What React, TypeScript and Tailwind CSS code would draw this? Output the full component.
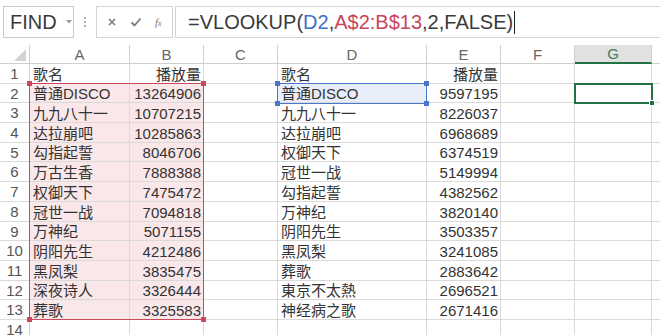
import React from "react";

const W = [
  "w-[30px]",
  "w-[100px]",
  "w-[74px]",
  "w-[74px]",
  "w-[149px]",
  "w-[74px]",
  "w-[74px]",
  "w-[77px]",
  "w-[60px]",
];

const H = [
  "h-[20px]",
  "h-[19px]",
  "h-[20px]",
  "h-[20px]",
  "h-[19px]",
  "h-[20px]",
  "h-[20px]",
  "h-[20px]",
  "h-[19px]",
  "h-[20px]",
  "h-[20px]",
  "h-[19px]",
  "h-[20px]",
  "h-[20px]",
];

const left: [string, string][] = [
  ["歌名", "播放量"],
  ["普通DISCO", "13264906"],
  ["九九八十一", "10707215"],
  ["达拉崩吧", "10285863"],
  ["勾指起誓", "8046706"],
  ["万古生香", "7888388"],
  ["权御天下", "7475472"],
  ["冠世一战", "7094818"],
  ["万神纪", "5071155"],
  ["阴阳先生", "4212486"],
  ["黑凤梨", "3835475"],
  ["深夜诗人", "3326444"],
  ["葬歌", "3325583"],
  ["", ""],
];

const right: [string, string][] = [
  ["歌名", "播放量"],
  ["普通DISCO", "9597195"],
  ["九九八十一", "8226037"],
  ["达拉崩吧", "6968689"],
  ["权御天下", "6374519"],
  ["冠世一战", "5149994"],
  ["勾指起誓", "4382562"],
  ["万神纪", "3820140"],
  ["阴阳先生", "3503357"],
  ["黑凤梨", "3241085"],
  ["葬歌", "2883642"],
  ["東京不太熱", "2696521"],
  ["神经病之歌", "2671416"],
  ["", ""],
];

const FONT = "font-['Liberation_Sans','Noto_Sans_CJK_SC',sans-serif]";

function Corner({ cls }: { cls: string }) {
  return <div className={`absolute w-[5px] h-[5px] ${cls}`} />;
}

export default function App() {
  const letters = ["A", "B", "C", "D", "E", "F", "G", ""];
  return (
    <div className={`w-[660px] h-[335px] overflow-hidden bg-white relative ${FONT} text-[#333]`}>
      {/* Toolbar */}
      <div className="h-[45px] flex items-start pt-[6px] pl-[3px]">
        <div className="w-[71px] h-[32px] border border-[#c8c8c8] flex items-center pl-[6px] relative">
          <span className="text-[20px] text-[#3a3a3a] leading-none">FIND</span>
          <svg className="absolute left-[62px] top-[13px]" width="6" height="4" viewBox="0 0 6 4">
            <path d="M0 0 L6 0 L3 3.5 Z" fill="#9a9a9a" />
          </svg>
        </div>
        <div className="w-[22px] h-[32px] flex flex-col items-center justify-center gap-[2px]">
          <div className="w-[2px] h-[2px] bg-[#b0b0b0]" />
          <div className="w-[2px] h-[2px] bg-[#b0b0b0]" />
          <div className="w-[2px] h-[2px] bg-[#b0b0b0]" />
        </div>
        <div className="w-[77px] h-[32px] border border-[#d4d4d4] flex items-center justify-around px-[4px]">
          <svg width="10" height="10" viewBox="0 0 10 10">
            <path d="M2 2 L8 8 M8 2 L2 8" stroke="#7a7a7a" strokeWidth="1.6" />
          </svg>
          <svg width="12" height="10" viewBox="0 0 12 10">
            <path d="M1.5 5.5 L4.5 8.5 L10.5 1.5" stroke="#7a7a7a" strokeWidth="1.8" fill="none" />
          </svg>
          <span className="font-['Liberation_Serif',serif] italic text-[11px] text-[#7a7a7a] leading-none">
            f<span className="text-[8px]">x</span>
          </span>
        </div>
        <div className="ml-[2px] flex-1 h-[32px] border-l border-t border-b border-[#d4d4d4] flex items-center pl-[12px]">
          <span className="text-[20px] leading-none text-[#3a3a3a] whitespace-nowrap">
            =VLOOKUP(<span className="text-[#3c72c8]">D2</span>,
            <span className="text-[#c9445a]">A$2:B$13</span>,2,FALSE)
          </span>
          <div className="w-[1px] h-[23px] bg-[#222] ml-[1px]" />
        </div>
      </div>

      {/* Grid */}
      <div className="relative">
        {/* Column header row */}
        <div className="flex h-[19px]">
          <div className={`${W[0]} shrink-0 h-full border-r border-b border-[#cfcfcf] relative`}>
            <svg className="absolute right-[3px] bottom-[2px]" width="12" height="12" viewBox="0 0 12 12">
              <path d="M12 0 L12 12 L0 12 Z" fill="#d3d3d3" />
            </svg>
          </div>
          {letters.map((l, i) => (
            <div
              key={i}
              className={`${W[i + 1]} shrink-0 h-full flex items-center justify-center text-[15px] leading-none border-r ${
                l === "G"
                  ? "bg-[#e1e1e1] border-b-2 border-b-[#217346] border-r-[#cfcfcf] text-[#3f7d5e]"
                  : "border-b border-[#cfcfcf] text-[#666]"
              }`}
            >
              {l}
            </div>
          ))}
        </div>

        {H.map((h, r) => {
          const rowNum = r + 1;
          const [a, b] = left[r];
          const [d, e] = right[r];
          const inRed = rowNum >= 2 && rowNum <= 13;
          const cells = ["", a, b, "", d, e, "", "", ""];
          return (
            <div key={r} className={`flex ${h}`}>
              <div
                className={`${W[0]} shrink-0 h-full flex items-center justify-center text-[15px] leading-none text-[#555] border-b border-[#dadada] border-r ${
                  rowNum === 2 ? "border-r-[#217346]" : "border-r-[#cfcfcf]"
                }`}
              >
                {rowNum}
              </div>
              {cells.slice(1).map((c, ci) => {
                const col = ci + 1;
                const right = col === 2 || col === 5;
                let bg = "";
                if (inRed && (col === 1 || col === 2)) bg = "bg-[#f9e7e9]";
                if (rowNum === 2 && col === 4) bg = "bg-[#e7eef9]";
                return (
                  <div
                    key={ci}
                    className={`${W[col]} shrink-0 h-full flex items-center text-[15px] leading-none whitespace-nowrap border-r border-b border-[#dadada] pt-[1px] ${bg} ${
                      right ? "justify-end pr-[2px]" : "justify-start pl-[3px]"
                    }`}
                  >
                    {c}
                  </div>
                );
              })}
            </div>
          );
        })}

        {/* Red range A2:B13 */}
        <div className="absolute left-[29px] top-[38px] w-[175px] h-[237px] border border-[#c9485a]">
          <Corner cls="bg-[#c9485a] -right-[3px] -top-[3px]" />
          <Corner cls="bg-[#c9485a] -right-[3px] -bottom-[3px]" />
          <Corner cls="bg-[#c9485a] -left-[3px] -bottom-[3px]" />
          <Corner cls="bg-[#c9485a] -left-[3px] -top-[3px]" />
        </div>

        {/* Blue range D2 */}
        <div className="absolute left-[277px] top-[38px] w-[150px] h-[21px] border border-[#4a77c9]">
          <Corner cls="bg-[#4a77c9] -right-[3px] -top-[3px]" />
          <Corner cls="bg-[#4a77c9] -right-[3px] -bottom-[3px]" />
          <Corner cls="bg-[#4a77c9] -left-[3px] -bottom-[3px]" />
          <Corner cls="bg-[#4a77c9] -left-[3px] -top-[3px]" />
        </div>

        {/* Active cell G2 */}
        <div className="absolute left-[574px] top-[38px] w-[79px] h-[21px] border-2 border-[#217346]">
          <div className="absolute -right-[4px] -bottom-[4px] w-[6px] h-[6px] bg-[#217346] border border-white" />
        </div>
      </div>
    </div>
  );
}
